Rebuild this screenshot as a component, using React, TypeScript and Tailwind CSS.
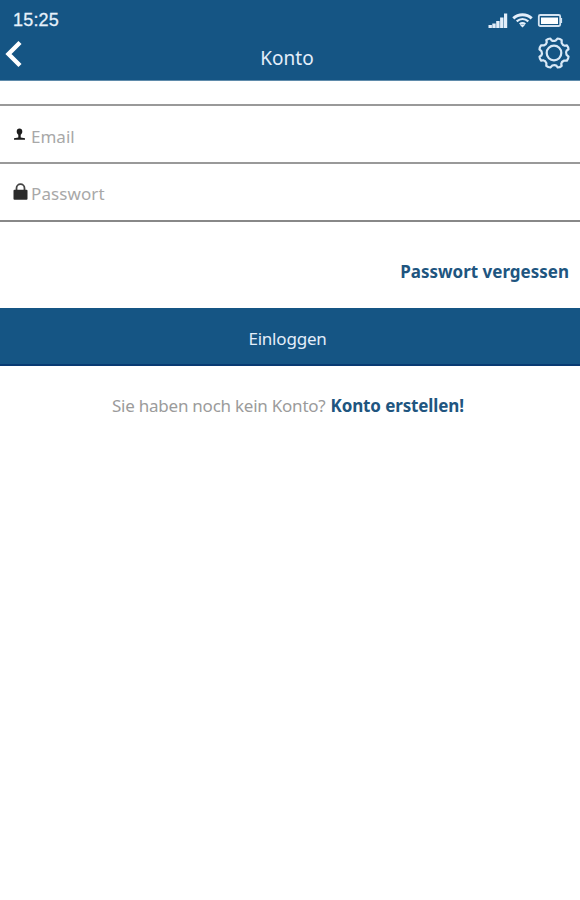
import { useState } from "react";

function StatusBar() {
  return (
    <div className="flex h-8 items-start justify-between pl-[13px] pr-[17px] pt-[10px]">
      <span className="font-['Liberation_Sans',sans-serif] text-[18px] leading-[20px] tracking-[0.2px] text-[#e6f1fb] [-webkit-text-stroke:0.3px_#e6f1fb]">15:25</span>
      <div className="flex items-center gap-[4px] pt-[2px]">
        <svg width="20" height="17" viewBox="0 0 20 17" fill="#e3eefa">
          <path d="M.5 13h3.400v3H.5zM4.300 11.500h3.400V16H4.300zM8.200 9h3.400v7H8.200zM12.100 5.500h3.400V16h-3.400zM16 1.500h3.200V16H16z" />
        </svg>
        <svg width="21" height="17" viewBox="0 0 21 17" fill="none" stroke="#e3eefa" strokeWidth="3">
          <path d="M1.300 6.300C6.500 1.500 14.500 1.500 19.700 6.300" />
          <path d="M4.700 9.400c3.500-3 8.100-3 11.600 0M7.700 12.200c1.800-1.400 3.800-1.400 5.600 0" strokeWidth="2.200" />
          <path d="M10.500 15.600l-2.300-2.400c1.400-1 3.200-1 4.600 0z" fill="#e3eefa" stroke="none" />
        </svg>
        <svg width="26" height="15" viewBox="0 0 26 15">
          <rect x="1.800" y="2" width="21.400" height="11" rx="1.500" fill="none" stroke="#d5e4f2" strokeWidth="1.800" />
          <rect x="4" y="4.500" width="17" height="6.500" fill="#fff" />
          <path d="M24.300 5v5" stroke="#d5e4f2" strokeWidth="1.600" />
        </svg>
      </div>
    </div>
  );
}

function GearIcon() {
  return (
    <svg width="32" height="32" viewBox="-16 -16 32 32" fill="none" stroke="#d8e8f6" strokeWidth="2.200" strokeLinejoin="round">
      <g transform="rotate(22.5)">
        <path d="M-2.200-14.800Q0-15.500 2.200-14.800L3.200-12.200Q5-10.300 7.200-10.800L8.900-12Q11-11 12-8.900L10.800-7.200Q10.300-5 12.200-3.200L14.800-2.200Q15.500 0 14.800 2.200L12.200 3.200Q10.300 5 10.800 7.200L12 8.900Q11 11 8.900 12L7.200 10.800Q5 10.300 3.200 12.200L2.200 14.800Q0 15.500-2.200 14.800L-3.200 12.200Q-5 10.300-7.200 10.800L-8.900 12Q-11 11-12 8.900L-10.800 7.200Q-10.300 5-12.200 3.200L-14.800 2.200Q-15.500 0-14.800-2.200L-12.200-3.200Q-10.300-5-10.800-7.200L-12-8.900Q-11-11-8.900-12L-7.200-10.800Q-5-10.300-3.200-12.200Z" />
      </g>
      <circle r="7.300" />
    </svg>
  );
}

export default function App() {
  const [email, setEmail] = useState("");
  const [password, setPassword] = useState("");

  return (
    <div className="h-[900px] w-[580px] overflow-hidden bg-white font-['Noto_Sans',sans-serif]">
      <header className="h-[81px] border-b border-[#5f8bab] bg-[#155584]">
        <StatusBar />
        <div className="grid h-[48px] grid-cols-3 items-start">
          <button aria-label="Zurück" className="w-fit pl-[5px] pt-[8px]">
            <svg width="18" height="28" viewBox="0 0 18 28" fill="none" stroke="#fff" strokeWidth="4.400">
              <path d="M15 2.500L3.500 14 15 25.500" />
            </svg>
          </button>
          <h1 className="pr-[6px] pt-[14px] text-center text-[19px] leading-[24px] text-[#e3eefa]">Konto</h1>
          <button aria-label="Einstellungen" className="mr-[10px] justify-self-end pt-[5px]">
            <GearIcon />
          </button>
        </div>
      </header>

      <form className="mt-[23px]" onSubmit={(e) => e.preventDefault()}>
        <label className="flex h-[58px] items-center border-t-2 border-[#999] pl-[13px]">
          <svg width="18" height="16" viewBox="0 0 18 16" fill="#1c1c1c">
            <path d="M6.500 2.500c1.800 0 2.800 1.200 2.800 3 0 1.700-.9 2.700-1.600 3.300v2.700l4.300.8v1.400H1v-1.400l4.300-.8V8.800C4.600 8.200 3.700 7.200 3.700 5.500c0-1.800 1-3 2.800-3z" />
          </svg>
          <input
            value={email}
            onChange={(e) => setEmail(e.target.value)}
            placeholder="Email"
            className="w-[400px] pt-[5px] text-[17px] outline-none placeholder:text-[#a8a8a8]"
          />
        </label>
        <label className="flex h-[58px] items-center border-t-2 border-[#999] pl-[13px]">
          <svg width="18" height="18" viewBox="0 0 18 18">
            <path d="M3.500 8V5.200a4 4 0 0 1 8 0V8" fill="none" stroke="#444" strokeWidth="1.800" />
            <rect x=".5" y="6.700" width="14" height="10" rx="1" fill="#2b2b2b" />
          </svg>
          <input
            type="password"
            value={password}
            onChange={(e) => setPassword(e.target.value)}
            placeholder="Passwort"
            className="w-[400px] pt-[4px] text-[17px] tracking-[0.1px] outline-none placeholder:text-[#a8a8a8]"
          />
        </label>
        <div className="flex h-[88px] justify-end border-t-2 border-[#888] pr-[11px] pt-[38px]">
          <a href="#" className="h-6 text-[17px] font-bold leading-[24px] text-[#20557f]">Passwort vergessen</a>
        </div>
        <button className="h-[58px] w-full border-b-2 border-[#083a72] bg-[#155584] pr-[5px] pt-[6px] text-[17px] tracking-[-0.2px] text-[#e3eefa]">
          Einloggen
        </button>
      </form>

      <p className="flex gap-[5px] pl-[112px] pt-[28px] text-[17px] leading-[24px] text-[#9b9b9b]">
        <span className="tracking-[-0.24px]">Sie haben noch kein Konto?</span>
        <a href="#" className="font-bold tracking-[-0.12px] text-[#20557f]">Konto erstellen!</a>
      </p>
    </div>
  );
}
